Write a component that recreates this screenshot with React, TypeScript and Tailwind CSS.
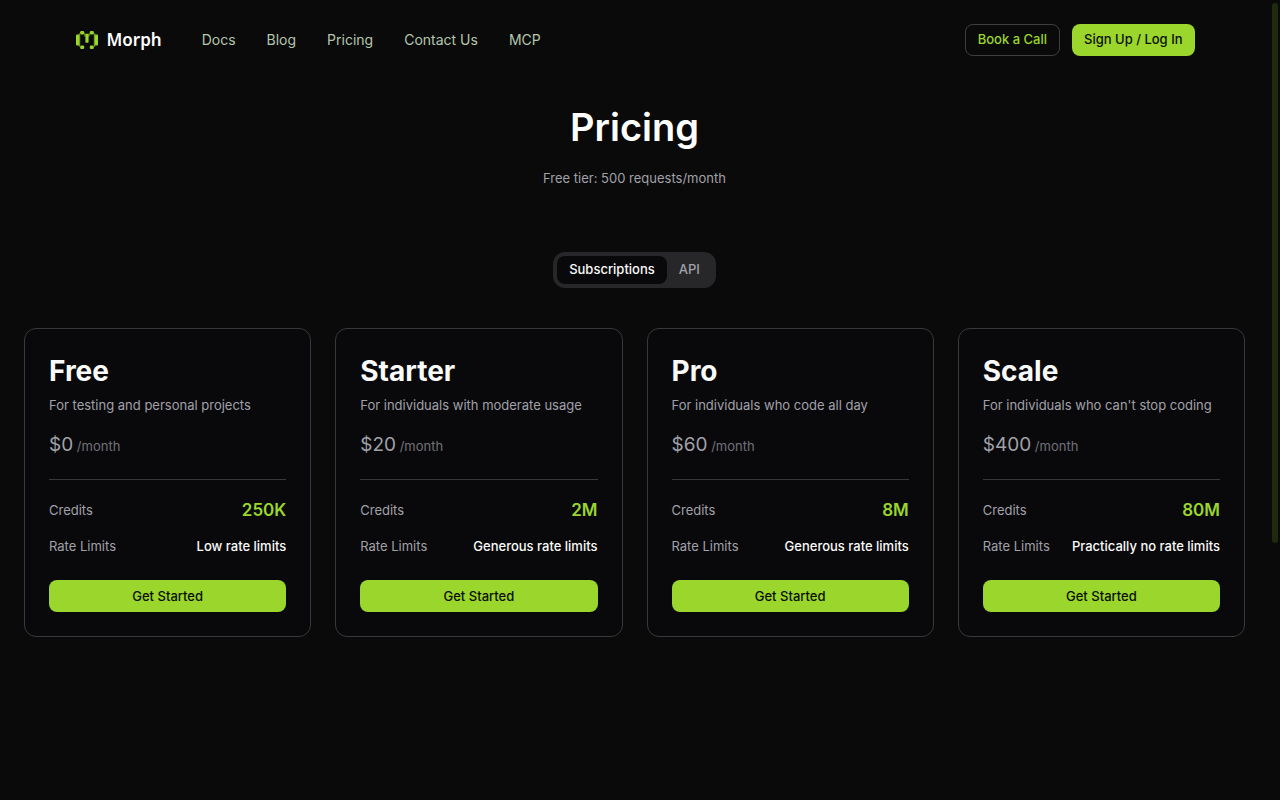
import clsx from "clsx";
import { useState } from "react";

const links = ["Docs", "Blog", "Pricing", "Contact Us", "MCP"];

type Plan = {
  name: string;
  description: string;
  price: string;
  credits: string;
  rateLimits: string;
};

const plans: Plan[] = [
  {
    name: "Free",
    description: "For testing and personal projects",
    price: "$0",
    credits: "250K",
    rateLimits: "Low rate limits",
  },
  {
    name: "Starter",
    description: "For individuals with moderate usage",
    price: "$20",
    credits: "2M",
    rateLimits: "Generous rate limits",
  },
  {
    name: "Pro",
    description: "For individuals who code all day",
    price: "$60",
    credits: "8M",
    rateLimits: "Generous rate limits",
  },
  {
    name: "Scale",
    description: "For individuals who can't stop coding",
    price: "$400",
    credits: "80M",
    rateLimits: "Practically no rate limits",
  },
];

function Logo() {
  return (
    <a href="#" className="flex items-center gap-2">
      <svg width="24" height="20" viewBox="0 0 24 20" fill="#9ad62b" aria-hidden="true">
        <rect x="1" y="4.5" width="3" height="11" rx="1" />
        <rect x="20" y="4.5" width="3" height="11" rx="1" />
        <rect x="3.6" y="3.5" width="1.6" height="13" opacity=".75" />
        <rect x="18.8" y="3.5" width="1.6" height="13" opacity=".75" />
        <rect x="5.2" y="1" width="4" height="3.4" rx="1.2" />
        <rect x="14.8" y="1" width="4" height="3.4" rx="1.2" />
        <rect x="5.2" y="15.6" width="4" height="3.4" rx="1.2" />
        <rect x="14.8" y="15.6" width="4" height="3.4" rx="1.2" />
        <rect x="10.4" y="3.8" width="3.2" height="9" rx=".8" />
        <path d="M9 3.6h1.6v3H9.400zM15 3.600h-1.600v3h1.200z" opacity=".7" />
      </svg>
      <span className="font-['Noto_Sans',sans-serif] text-[17px] font-semibold text-white">
        Morph
      </span>
    </a>
  );
}

function Header() {
  return (
    <header className="mx-auto flex h-20 w-full max-w-[1120px] items-center justify-between">
      <div className="flex items-center gap-10">
        <Logo />
        <nav className="flex items-center gap-[31px] text-sm text-[#b4c6ae]">
          {links.map((link) => (
            <a key={link} href="#">
              {link}
            </a>
          ))}
        </nav>
      </div>
      <div className="flex items-center gap-3 text-[13px] font-medium">
        <button
          type="button"
          className="h-8 rounded-lg border border-[#3f3f42] px-3 text-[#9ad62b]"
        >
          Book a Call
        </button>
        <button
          type="button"
          className="h-8 rounded-lg bg-[#9ad62b] px-3 text-[#0a0f02]"
        >
          Sign Up / Log In
        </button>
      </div>
    </header>
  );
}

function PlanCard({ plan }: { plan: Plan }) {
  return (
    <article className="rounded-xl border border-[#39393b] bg-[#09090b] p-6 text-[13px] leading-5 text-[#a1a1aa]">
      <h2 className="text-[28px] leading-9 font-bold text-[#fafafa]">{plan.name}</h2>
      <p className="mt-1.5">{plan.description}</p>
      <p className="mt-4 leading-7">
        <span className="text-[19px]">{plan.price}</span>{" "}
        <span className="text-[#71717a]">/month</span>
      </p>
      <dl className="mt-[19px] flex flex-col gap-3 border-t border-[#39393b] pt-4">
        <div className="flex items-center justify-between">
          <dt>Credits</dt>
          <dd className="text-[17px] leading-7 font-semibold text-[#9ad62b]">
            {plan.credits}
          </dd>
        </div>
        <div className="flex items-center justify-between">
          <dt>Rate Limits</dt>
          <dd className="font-medium text-[#fafafa]">{plan.rateLimits}</dd>
        </div>
      </dl>
      <button
        type="button"
        className="mt-6 h-8 w-full rounded-lg bg-[#9ad62b] font-medium text-[#0a0f02]"
      >
        Get Started
      </button>
    </article>
  );
}

function BillingTabs() {
  const [tab, setTab] = useState("Subscriptions");

  return (
    <div
      role="tablist"
      className="flex h-9 rounded-xl bg-[#27272a] p-1 text-[13px] font-medium"
    >
      {["Subscriptions", "API"].map((name) => (
        <button
          key={name}
          type="button"
          role="tab"
          aria-selected={tab === name}
          onClick={() => setTab(name)}
          className={clsx(
            "rounded-lg px-3",
            tab === name ? "bg-[#09090b] text-[#fafafa]" : "text-[#a1a1aa]"
          )}
        >
          {name}
        </button>
      ))}
    </div>
  );
}

export default function App() {
  return (
    <div className="flex min-h-screen bg-[#0a0a0a] font-['Inter',sans-serif]">
      <div className="min-w-0 flex-1">
        <Header />
        <main className="flex flex-col items-center px-6 pt-6">
          <h1 className="text-[38px] leading-[46px] font-semibold text-white">
            Pricing
          </h1>
          <p className="mt-[18px] text-[13px] leading-5 text-[#a1a1aa]">
            Free tier: 500 requests/month
          </p>
          <div className="mt-16">
            <BillingTabs />
          </div>
          <section className="mt-10 grid w-full grid-cols-4 gap-6">
            {plans.map((plan) => (
              <PlanCard key={plan.name} plan={plan} />
            ))}
          </section>
        </main>
      </div>
      <div className="w-[11px] shrink-0 pt-[3px] pl-[3px]" aria-hidden="true">
        <div className="h-[540px] w-[6px] rounded-full bg-[#202a0e]" />
      </div>
    </div>
  );
}
